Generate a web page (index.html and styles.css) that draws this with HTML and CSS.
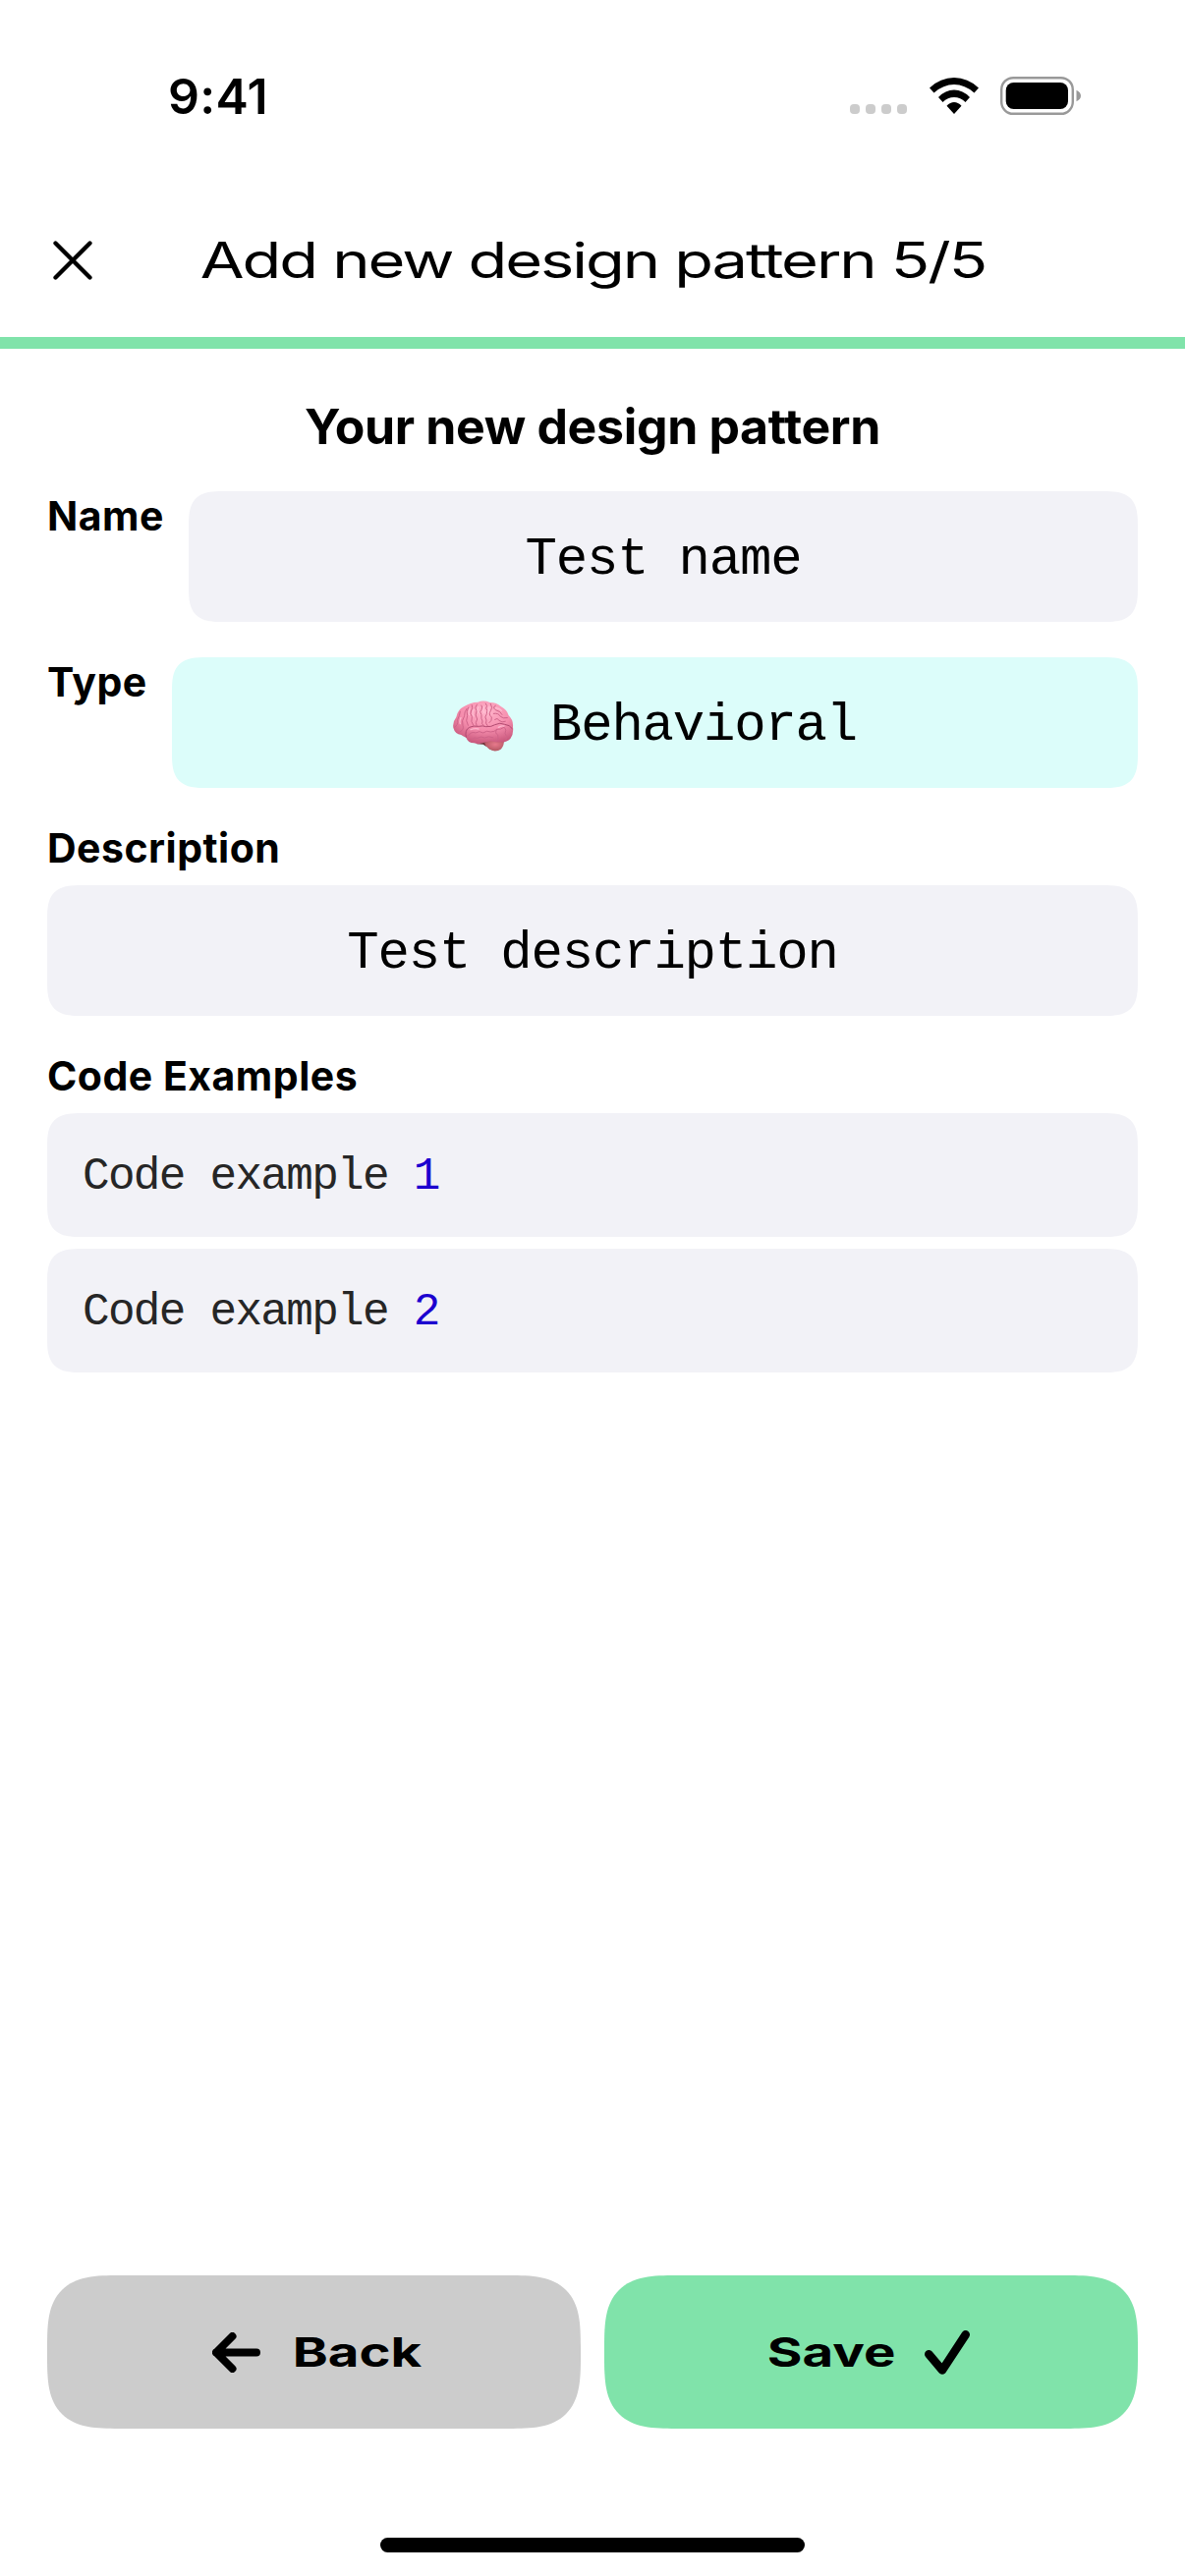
FILE: index.html
```html
<!DOCTYPE html>
<html lang="en">
<head>
<meta charset="utf-8">
<title>Add new design pattern</title>
<link rel="stylesheet" href="styles.css">
</head>
<body>
<div class="screen">
  <div class="status-bar">
    <span class="time">9:41</span>
    <div class="indicators">
      <div class="signal"><i></i><i></i><i></i><i></i></div>
      <svg class="wifi" viewBox="0 0 50 37">
        <path d="M0 10.500Q11 0 25 0T50 10.500L45.500 15.500Q36 7 25 7T4.500 15.500Z"/>
        <path d="M9 20Q16 12.500 25 12.500T41 20L36.500 25Q31.500 20 25 20T13.500 25Z"/>
        <path d="M17.500 28.700Q21 25 25 25T32.500 28.700L25 37Z"/>
      </svg>
      <svg class="battery" viewBox="0 0 82 39">
        <rect class="shell" x="1.200" y="1.200" width="72.600" height="36.600" rx="12"/>
        <rect x="5.700" y="6" width="63.300" height="27" rx="8"/>
        <path class="nub" d="M77.500 13.700Q82 16 82 19.500T77.500 25.300Z"/>
      </svg>
    </div>
  </div>

  <header class="nav">
    <svg class="close" viewBox="0 0 40 40"><path d="M2.500 2.500L37.500 37.500M37.500 2.500L2.500 37.500"/></svg>
    <h1 class="nav-title"><span class="wide">Add new design pattern 5/5</span></h1>
  </header>
  <div class="progress"></div>

  <main class="content">
    <h2 class="heading">Your new design pattern</h2>
    <div class="row">
      <span class="label label-name">Name</span>
      <div class="field">Test name</div>
    </div>
    <div class="row">
      <span class="label label-type">Type</span>
      <div class="field behavioral">
        <svg class="brain" viewBox="66 64 186 154">
          <defs>
            <radialGradient id="lobe" cx=".55" cy=".25" r=".75">
              <stop offset="0" stop-color="#ffb5cb"/>
              <stop offset=".55" stop-color="#f58dad"/>
              <stop offset="1" stop-color="#c9587c"/>
            </radialGradient>
            <radialGradient id="stem" cx=".55" cy=".4" r=".7">
              <stop offset="0" stop-color="#e8798c"/>
              <stop offset="1" stop-color="#a8505a"/>
            </radialGradient>
          </defs>
          <path fill="#6f3339" d="M135 190L185 185L178 206Q164 203 158 197L139 196Z"/>
          <path fill="url(#stem)" d="M162 191Q190 178 222 188Q220 211 204 216Q187 221 174 209Q163 200 162 191Z"/>
          <path fill="url(#lobe)" d="M67 146Q64 129 76 114Q80 91 99 82Q119 68 142 68Q159 61 179 69Q200 69 213 82Q231 91 236 109Q251 123 249 144Q252 165 241 180Q229 192 211 190Q195 191 181 187L156 193Q143 198 130 193Q112 193 106 176Q98 173 91 168Q72 165 67 146Z"/>
          <g class="folds">
            <path class="fissure" d="M106 175Q101 153 116 145Q128 139 145 142Q157 139 167 143Q184 144 194 137Q210 129 224 136Q239 137 247 149"/>
            <path d="M70 145Q83 139 80 122Q86 110 88 97M88 158Q101 152 96 139Q91 126 101 110Q100 98 108 88"/>
            <path d="M113 84Q105 98 110 109Q103 125 112 139M124 77Q128 86 121 96Q117 104 124 112Q119 128 128 139"/>
            <path d="M139 75Q130 85 138 95Q132 108 140 120Q133 130 138 140M153 78Q158 84 153 91Q145 97 153 107Q151 119 156 126Q151 135 160 140"/>
            <path d="M166 72Q173 79 167 87Q173 92 169 104Q161 114 168 123Q163 132 172 141M181 73Q189 86 181 95Q173 105 184 114Q186 125 177 131"/>
            <path d="M196 79Q185 83 196 92Q212 96 216 106M190 103Q205 100 211 112Q219 119 232 116M194 121Q202 114 207 124Q215 132 226 127"/>
            <path d="M112 171Q122 156 135 162Q147 154 158 162Q169 153 181 159Q193 159 200 151Q211 153 222 145M124 181Q132 174 140 178Q152 171 163 177Q174 170 188 176"/>
            <path d="M200 151Q192 163 203 168Q208 181 198 188M224 146Q231 153 225 163Q233 171 228 183"/>
          </g>
          <g class="shine">
            <path d="M117 88Q113 99 116 107M129 91Q124 101 129 111M144 83Q139 91 145 101M161 82Q156 90 161 101M177 82Q175 93 173 101M90 116Q85 126 88 134M197 86Q208 87 214 94M120 152Q133 147 144 150M205 145Q213 140 222 141"/>
          </g>
        </svg>
        <span>Behavioral</span>
      </div>
    </div>
    <section class="group">
      <span class="label label-desc">Description</span>
      <div class="field">Test description</div>
    </section>
    <section class="group">
      <span class="label label-code">Code Examples</span>
      <div class="field code">Code example <b>1</b></div>
      <div class="field code">Code example <b>2</b></div>
    </section>
  </main>

  <footer class="actions">
    <button class="button back">
      <svg class="arrow" viewBox="0 0 49 41"><path d="M20.500 4L4 20.500L20.500 37M4 20.500H45"/></svg>
      <span class="button-text">Back</span>
    </button>
    <button class="button save">
      <span class="button-text">Save</span>
      <svg class="check" viewBox="0 0 46 45"><path d="M4.300 24.300L18 40.500L41.700 4.300"/></svg>
    </button>
  </footer>
  <div class="home-indicator"></div>
</div>
</body>
</html>
```
FILE: styles.css
```css
* { box-sizing: border-box; }

body {
  margin: 0;
  background: #fff;
  color: #000;
  font-family: Inter, "Liberation Sans", sans-serif;
}

.screen {
  width: 1206px;
  height: 2622px;
  display: flex;
  flex-direction: column;
  overflow: hidden;
}

.status-bar {
  height: 187px;
  padding: 67px 106px 0 171px;
  display: flex;
  justify-content: space-between;
  align-items: flex-start;
}

.time {
  font-size: 50px;
  line-height: 62px;
  font-weight: 600;
  letter-spacing: .3px;
}

.indicators {
  display: flex;
  align-items: flex-start;
  padding-top: 11px;
}

.signal {
  display: flex;
  gap: 6px;
  margin: 28px 23px 0 0;
}

.signal i {
  width: 10px;
  height: 10px;
  border-radius: 4px;
  background: #ccc;
}

.wifi { width: 50px; height: 37px; margin: 1px 22px 0 0; }
.battery { width: 82px; height: 39px; }
.shell { fill: none; stroke: #999; stroke-width: 2.4; }
.nub { fill: #999; }

.nav {
  height: 156px;
  padding: 0 54px;
  display: grid;
  grid-template-columns: 40px 1fr 40px;
  align-items: center;
}

.close {
  width: 40px;
  height: 40px;
  fill: none;
  stroke: #000;
  stroke-width: 4.3;
  stroke-linecap: round;
}

.nav-title {
  margin: 0;
  text-align: center;
  font-size: 50px;
  line-height: 60px;
  font-weight: 400;
  white-space: nowrap;
}

.wide {
  display: inline-block;
  letter-spacing: -1.6px;
  transform: scaleX(1.3);
}

.progress { height: 12px; background: #80e3aa; }

.content {
  flex: 1;
  padding: 48px 48px 0;
}

.heading {
  margin: 0;
  height: 97px;
  text-align: center;
  font-size: 50px;
  line-height: 62px;
  font-weight: 700;
  letter-spacing: -.35px;
}

.row {
  display: flex;
  margin-bottom: 36px;
}

.label {
  display: block;
  height: 50px;
  font-size: 41px;
  line-height: 50px;
  font-weight: 700;
  letter-spacing: .5px;
  white-space: nowrap;
}

.label-name { width: 144px; }
.label-type { width: 127px; }

.field {
  flex: 1;
  height: 133px;
  padding-top: 6px;
  display: flex;
  align-items: center;
  justify-content: center;
  border-radius: 26px;
  background: #f2f2f7;
  font-family: "Liberation Mono", monospace;
  font-size: 54px;
  letter-spacing: -1.2px;
}

.behavioral { background: #dcfdfa; gap: 37px; }
.brain { width: 62px; height: 52px; }
.folds { fill: none; stroke: #cf6489; stroke-width: 3; stroke-linecap: round; }
.fissure { stroke: #b04a70; }
.shine { fill: none; stroke: #ffc6d8; stroke-width: 4; stroke-linecap: round; opacity: .75; }

.group { margin-bottom: 36px; }
.group .label { height: 63px; }

.code {
  height: 126px;
  margin-bottom: 12px;
  padding: 3px 0 0 36px;
  justify-content: flex-start;
  color: #262626;
  font-size: 46px;
  letter-spacing: -1.7px;
  white-space: pre;
}

.code b { color: #1c00cf; font-weight: 400; }

.actions {
  height: 267px;
  padding: 0 48px;
  display: grid;
  grid-template-columns: 1fr 1fr;
  column-gap: 24px;
}

.button {
  height: 156px;
  border: 0;
  padding: 0;
  display: flex;
  align-items: center;
  justify-content: center;
  border-radius: 54px;
  color: #000;
  font: 700 41px/50px Inter, "Liberation Sans", sans-serif;
}

@supports (corner-shape: squircle) {
  .field { border-radius: 36px; corner-shape: superellipse(1.6); }
  .button { border-radius: 73px; corner-shape: superellipse(1.6); }
}

.back { background: #ccc; gap: 49px; padding-right: 10px; }
.save { background: #80e3aa; gap: 46px; padding-left: 11px; }
.button-text { transform: scaleX(1.33); }

.arrow, .check {
  fill: none;
  stroke: #000;
  stroke-width: 8;
  stroke-linecap: round;
  stroke-linejoin: round;
}

.arrow { width: 49px; height: 41px; }
.check { width: 46px; height: 45px; stroke-width: 8.6; }

.home-indicator {
  width: 432px;
  height: 15px;
  margin: 0 auto 24px;
  border-radius: 8px;
  background: #000;
}
```
